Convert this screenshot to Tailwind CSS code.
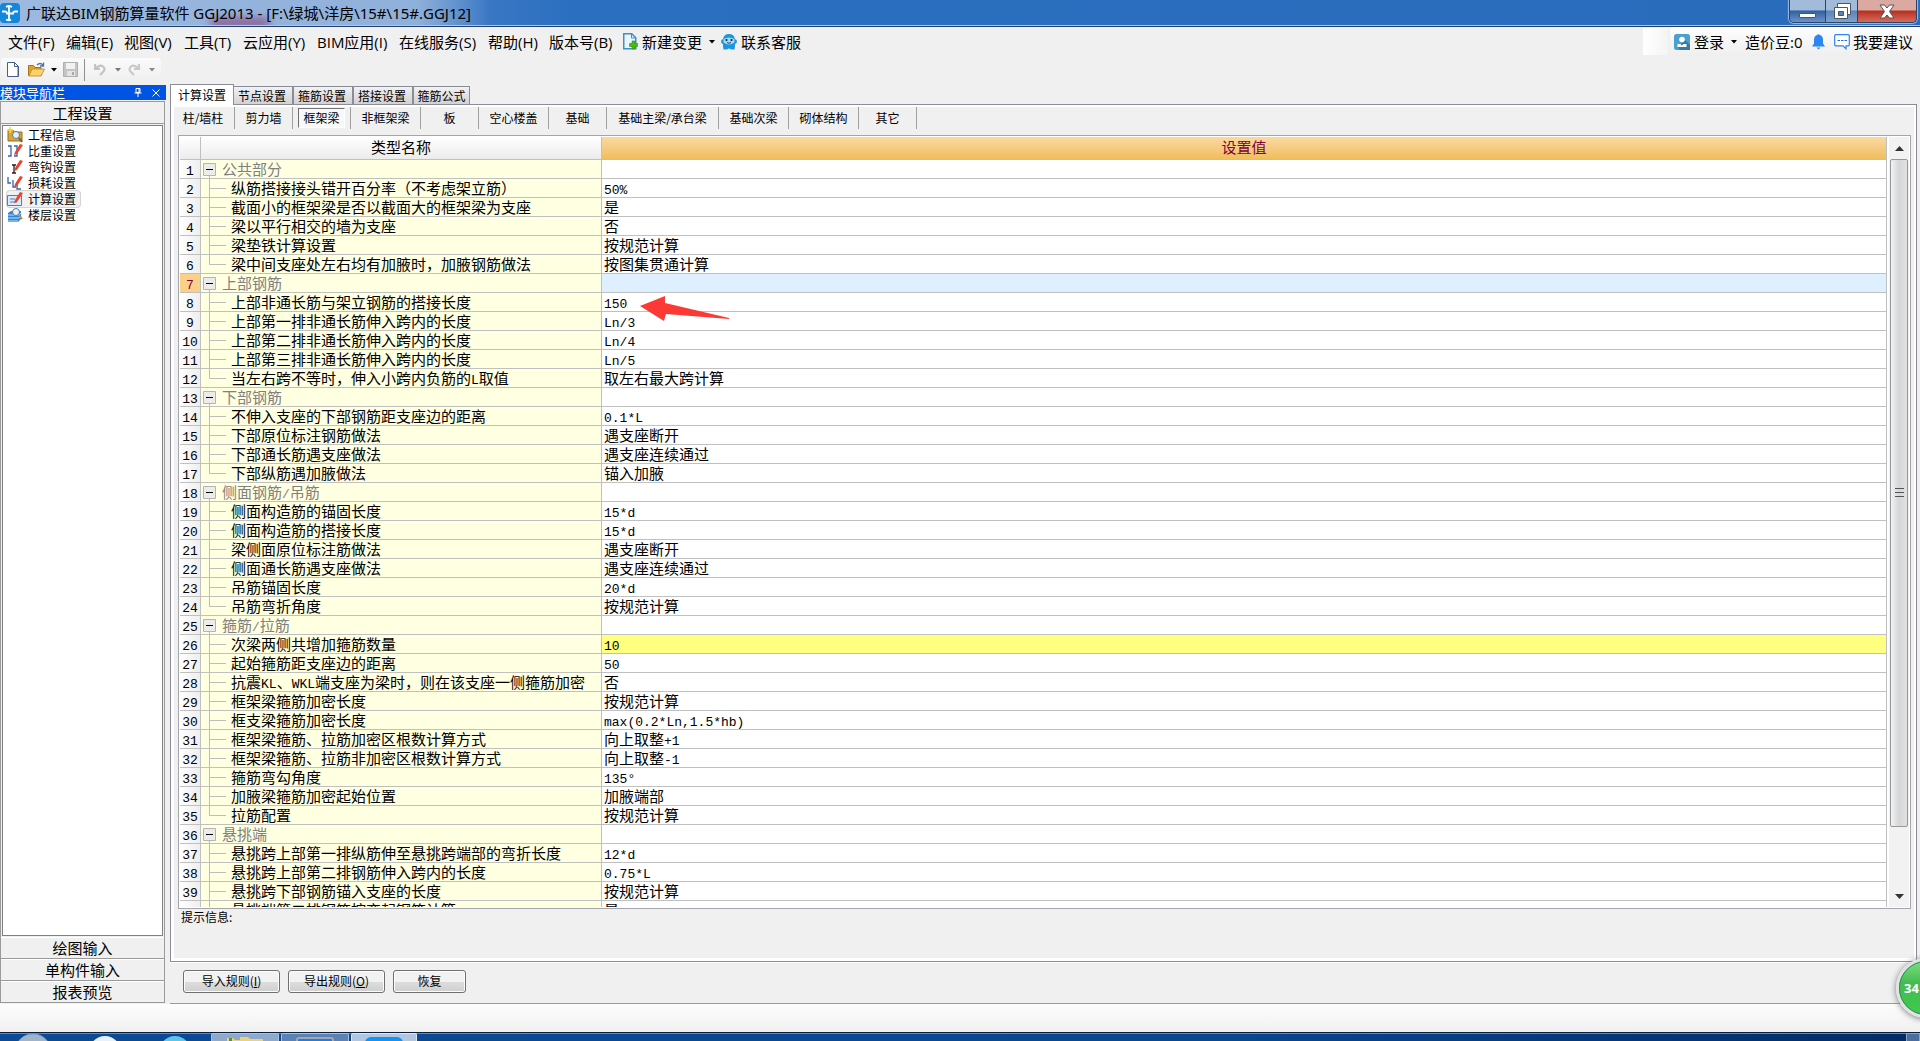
<!DOCTYPE html>
<html lang="zh-CN">
<head>
<meta charset="utf-8">
<title>广联达BIM钢筋算量软件 GGJ2013</title>
<script src="https://cdn.jsdelivr.net/npm/@tailwindcss/browser@4"></script>
</head>
<body class="h-screen overflow-hidden flex flex-col bg-[#f0f0f0] text-black text-[12px] leading-[16px] font-['Noto_Sans_CJK_SC',sans-serif] whitespace-nowrap">

<!-- Title bar -->
<header class="relative shrink-0 h-[27px] flex items-start justify-between overflow-hidden border-b border-[#1d3f73] bg-linear-to-r from-[#7fa3d6] via-[#2a6fc0] via-30% to-[#2a6cbc]">
  <div class="absolute left-0 top-0 h-[26px] w-[490px] bg-linear-to-r from-[#9db9df] via-[#8fb0da] via-85% to-transparent"></div>
  <div class="absolute left-[210px] top-[18px] h-[10px] w-[60px] rounded-full bg-[#8a5f93] blur-[4px]"></div>
  <div class="absolute left-0 top-[25px] h-px w-full bg-[#a9c8ee]"></div>
  <div class="relative flex items-center gap-[6px] h-[25px] text-[15px] font-['Noto_Sans','Noto_Sans_CJK_SC',sans-serif]">
    <svg class="w-[20px] h-[20px]" viewBox="0 0 20 20"><rect width="20" height="20" rx="4" fill="#1287dc"/><path d="M9 3v14M6 4q3-2 6 0M2 8.500h3q2 0 2 2h6q0-2 2-2h3M6 16.500q3 1.500 5 0" fill="none" stroke="#fff" stroke-width="1.800"/></svg>
    <h1>广联达BIM钢筋算量软件 GGJ2013 - [F:\绿城\洋房\15#\15#.GGJ12]</h1>
  </div>
  <div class="relative mr-[3px] flex h-[23px] rounded-b-[5px] border border-t-0 border-[#2b4569] overflow-hidden shadow-[0_0_1px_1px_#9fbde2]">
    <button aria-label="最小化" class="w-[36px] border-r border-[#2b4569] bg-linear-to-b from-[#a3bbdb] from-45% via-[#2f609f] via-50% to-[#6b93c8] flex justify-center items-end pb-[4px]"><span class="w-[17px] h-[5px] bg-white border border-[#4b5568] rounded-[1px]"></span></button>
    <button aria-label="还原" class="w-[32px] border-r border-[#2b4569] bg-linear-to-b from-[#a3bbdb] from-45% via-[#5a84b8] via-50% to-[#7fa2d0] flex justify-center items-center">
      <svg class="w-[20px] h-[18px]" viewBox="0 0 20 18"><path d="M5.500 1.500h13v11h-13z" fill="#fff" stroke="#4b5568"/><path d="M2.500 5.500h13v11h-13z" fill="#fff" stroke="#4b5568"/><path d="M6.500 9.500h5v4h-5z" fill="#5a84b8" stroke="#4b5568"/></svg>
    </button>
    <button aria-label="关闭" class="w-[58px] bg-linear-to-b from-[#dba8a2] from-45% via-[#b52f1f] via-50% to-[#d9695a] flex justify-center items-center">
      <svg class="w-[16px] h-[15px]" viewBox="0 0 16 15"><path d="M1 1h4.500l2.500 3 2.500-3H15l-4.500 6.500L15 14h-4.500L8 11l-2.500 3H1l4.500-6.500z" fill="#fff" stroke="#54505c"/></svg>
    </button>
  </div>
</header>

<!-- Menu bar -->
<nav class="shrink-0 h-[31px] flex justify-between pl-[8px] text-[15px] font-['Open_Sans','Noto_Sans_CJK_SC',sans-serif]">
  <div class="flex items-center pb-[2px]">
    <button class="w-[58px] text-left">文件(F)</button>
    <button class="w-[58px] text-left">编辑(E)</button>
    <button class="w-[60px] text-left">视图(V)</button>
    <button class="w-[59px] text-left">工具(T)</button>
    <button class="w-[74px] text-left">云应用(Y)</button>
    <button class="w-[82px] text-left">BIM应用(I)</button>
    <button class="w-[89px] text-left">在线服务(S)</button>
    <button class="w-[61px] text-left">帮助(H)</button>
    <button class="w-[74px] text-left">版本号(B)</button>
    <button class="w-[98px] flex items-center gap-[4px]">
      <svg class="w-[15px] h-[17px] shrink-0" viewBox="0 0 15 17"><path d="M.75.750h8l4 4v11h-12z" fill="#eaf6ff" stroke="#3d8fc4" stroke-width="1.500"/><path d="M8.500 1v4h4" fill="none" stroke="#3d8fc4"/><path d="M9 8h3v2.500h2.500v3H12V16H9v-2.500H6.500v-3H9z" fill="#4eb81e" stroke="#2f8a0c" stroke-width=".6"/></svg>
      新建变更
      <svg class="w-[6px] h-[4px] ml-[3px] shrink-0" viewBox="0 0 6 4"><path d="M0 0h6L3 3.500z"/></svg>
    </button>
    <button class="flex items-center gap-[4px]">
      <svg class="w-[16px] h-[16px]" viewBox="0 0 16 16"><path d="M2 5q1-5 6-5t6 5q2 .5 2 2.500T14 10v2l-.5 3.500h-3L8 14.500l-2.500 1h-3L2 12v-2Q0 9.500 0 7.500T2 5z" fill="#1b95dd"/><path d="M2.500 5q5.500-3 11 0v3.500q-5.500 4-11 0z" fill="#9fd9f8"/><circle cx="5.500" cy="6" r="1.100" fill="#123"/><circle cx="10.500" cy="6" r="1.100" fill="#123"/><path d="M6 8.500q2 1.500 4 0" fill="none" stroke="#123" stroke-width=".8"/></svg>
      联系客服
    </button>
  </div>
  <div class="flex">
    <div class="w-[25px] h-[27px] mt-px mr-[2px] bg-linear-to-r from-white to-[#f4f4f4]"></div>
    <div class="h-[29px] flex items-center pl-[4px] pr-[7px] rounded-[3px] bg-linear-to-b from-[#fdfdfd] to-[#efefef]">
      <button class="w-[71px] flex items-center gap-[4px]">
        <svg class="w-[16px] h-[16px] shrink-0" viewBox="0 0 16 16"><rect width="16" height="16" rx="2.500" fill="#4ba0cf"/><path d="m11 6 5 5v5H6l-2-3z" fill="#39799f"/><circle cx="8" cy="5.500" r="2.800" fill="#fff"/><path d="M3.500 10h3L8 11.500 9.500 10h3v3h-9z" fill="#fff"/></svg>
        登录
        <svg class="w-[6px] h-[4px] ml-[3px] shrink-0" viewBox="0 0 6 4"><path d="M0 0h6L3 3.500z"/></svg>
      </button>
      <span class="w-[67px]">造价豆:0</span>
      <button aria-label="通知" class="w-[22px]"><svg class="w-[13px] h-[16px]" viewBox="0 0 13 16"><path d="M5 1q1.500-1.500 3 0 3 1 3 5v3.500l2 3H0l2-3V6q0-4 3-5zM4.500 13.500h4L6.500 15.500z" fill="#2a86f0"/></svg></button>
      <button class="flex items-center gap-[3px]">
        <svg class="w-[16px] h-[16px]" viewBox="0 0 16 16"><path d="M1.500.7h13l.8.8v9.500l-.8.8H12v3l-3-3H1.500l-.8-.8V1.500z" fill="#fff" stroke="#2a86f0" stroke-width="1.200"/><path d="M3.500 6.500H6m1 0h2.500m1 0H13" stroke="#2a6fd0" stroke-width="1.200"/></svg>
        我要建议
      </button>
    </div>
  </div>
</nav>

<!-- Tool bar -->
<div class="shrink-0 h-[25px] flex">
  <div class="ml-px h-[23px] w-[160px] rounded-[3px] flex items-center bg-linear-to-b from-[#fbfbfb] to-[#efefef]">
    <button aria-label="新建" class="w-[26px] pl-[6px]"><svg class="w-[12px] h-[15px]" viewBox="0 0 12 15"><path d="M.5.500h7l4 4v10H.5z" fill="#fff" stroke="#4a5f86"/><path d="M7.500.500v4h4M11 5v9" fill="none" stroke="#4a5f86"/></svg></button>
    <button aria-label="打开" class="w-[36px] flex items-center gap-[6px] pl-px">
      <svg class="w-[17px] h-[15px]" viewBox="0 0 17 15"><path d="M.5 13.500v-10h5l1.500 2h6v8z" fill="#e0a32e" stroke="#a8741a"/><path d="m1 14 3-7h12.500l-3.500 7z" fill="#fbd36a" stroke="#b98524" stroke-width=".8"/><path d="M9 3q3-3 6 0M15.500.500V4H12" fill="none" stroke="#4773a8" stroke-width="1.300"/></svg>
      <svg class="w-[6px] h-[4px]" viewBox="0 0 6 4"><path d="M0 0h6L3 3.500z"/></svg>
    </button>
    <button aria-label="保存" class="w-[22px] border-r border-[#8e8e8e] h-[22px] flex items-center"><svg class="w-[15px] h-[15px]" viewBox="0 0 15 15"><path d="M.5.500h14v14H.5z" fill="#c4c4c4" stroke="#b0b0b0"/><path d="M3 1h9v6H3z" fill="#f2f2f2"/><path d="M4 9h8v5H4z" fill="#e4e4e4"/><path d="M9 10h2v3H9z" fill="#aaa"/></svg></button>
    <button aria-label="撤销" class="w-[36px] pl-[9px] flex items-center gap-[9px]">
      <svg class="w-[12px] h-[13px] shrink-0" viewBox="0 0 12 13"><path d="M1 1v5h5M1.500 5.500Q6 1 9 3.500t0 5.500L6 12" fill="none" stroke="#c3c3c3" stroke-width="2.200"/></svg>
      <svg class="w-[6px] h-[4px] shrink-0" viewBox="0 0 6 4"><path d="M0 0h6L3 3.500z" fill="#777"/></svg>
    </button>
    <button aria-label="重做" class="w-[36px] pl-[7px] flex items-center gap-[9px]">
      <svg class="w-[12px] h-[13px] shrink-0" viewBox="0 0 12 13"><path d="M11 1v5H6M10.500 5.500Q6 1 3 3.500T3 9l3 3" fill="none" stroke="#c9c9c9" stroke-width="2.200"/></svg>
      <svg class="w-[6px] h-[4px] shrink-0" viewBox="0 0 6 4"><path d="M0 0h6L3 3.500z" fill="#888"/></svg>
    </button>
  </div>
</div>

<!-- Work area -->
<div class="flex-1 min-h-0 flex">

  <!-- Module navigator -->
  <aside class="shrink-0 w-[166px] flex flex-col pt-[2px]">
    <div class="shrink-0 h-[15px] flex items-center bg-[#0054e3] text-white">
      <span class="flex-1 text-[13px] leading-[15px]">模块导航栏</span>
      <button aria-label="固定" class="w-[18px]"><svg class="w-[8px] h-[9px]" viewBox="0 0 8 9"><path d="M2 .500h4v4H2zM5 .500v4M.5 5h7M4 5v4" fill="none" stroke="#fff"/></svg></button>
      <button aria-label="关闭" class="w-[14px]"><svg class="w-[8px] h-[8px]" viewBox="0 0 8 8"><path d="m.5.500 7 7m0-7-7 7" fill="none" stroke="#fff"/></svg></button>
    </div>
    <div class="flex-1 min-h-0 mt-px mr-px flex flex-col border-x border-[#9a9a9a] text-[15px]">
      <button class="shrink-0 h-[23px] border-y border-[#9a9a9a]">工程设置</button>
      <ul class="flex-1 mx-px mt-px mb-px border border-[#808080] bg-white pl-[4px] pt-px text-[12px]" id="nav"></ul>
      <button class="shrink-0 h-[22px] border-y border-b-[#9a9a9a] border-t-white">绘图输入</button>
      <button class="shrink-0 h-[22px] border-y border-b-[#9a9a9a] border-t-white">单构件输入</button>
      <button class="shrink-0 h-[22px] border-y border-b-[#9a9a9a] border-t-white">报表预览</button>
    </div>
    <div class="h-px"></div>
  </aside>

  <main class="flex-1 min-w-0 ml-[4px] flex flex-col border-b border-[#9a9a9a] pr-[3px]">
    <div role="tablist" class="shrink-0 h-[21px] flex items-end">
      <button role="tab" aria-selected="true" class="relative z-10 w-[64px] h-[21px] -mb-px border border-b-0 border-[#8c8c98] bg-white pb-px">计算设置</button>
      <button role="tab" class="w-[59px] h-[18px] pr-[2px] border border-l-0 border-b-0 border-[#8c8c98] bg-linear-to-b from-[#f2f2f2] to-[#d2d2d2]">节点设置</button>
      <button role="tab" class="w-[60px] h-[18px] pr-[2px] border border-b-0 border-[#8c8c98] bg-linear-to-b from-[#f2f2f2] to-[#d2d2d2]">箍筋设置</button>
      <button role="tab" class="w-[60px] h-[18px] pr-[2px] border border-b-0 border-[#8c8c98] bg-linear-to-b from-[#f2f2f2] to-[#d2d2d2]">搭接设置</button>
      <button role="tab" class="w-[57px] h-[18px] border border-b-0 border-[#8c8c98] bg-linear-to-b from-[#f2f2f2] to-[#d2d2d2]">箍筋公式</button>
    </div>

    <div class="flex-1 min-h-0 border border-[#8c8c98] bg-white p-[3px] pr-[2px] pt-[2px] flex">
      <div class="flex-1 min-w-0 bg-[#f0f0f0] flex flex-col">
        <div class="shrink-0 h-[22px] flex">
          <button class="w-[61px] pr-[2px] border-r border-[#a0a0a0]">柱/墙柱</button>
          <button class="w-[58px] border-r border-[#a0a0a0]">剪力墙</button>
          <div class="w-[58px] border-r border-[#a0a0a0] px-[5px] py-px"><button class="w-full h-[20px] border border-t-[#707070] border-l-[#707070] border-b-white border-r-white bg-[#f8f8f8]">框架梁</button></div>
          <button class="w-[70px] border-r border-[#a0a0a0]">非框架梁</button>
          <button class="w-[58px] border-r border-[#a0a0a0]">板</button>
          <button class="w-[70px] border-r border-[#a0a0a0]">空心楼盖</button>
          <button class="w-[58px] border-r border-[#a0a0a0]">基础</button>
          <button class="w-[112px] border-r border-[#a0a0a0]">基础主梁/承台梁</button>
          <button class="w-[70px] border-r border-[#a0a0a0]">基础次梁</button>
          <button class="w-[70px] border-r border-[#a0a0a0]">砌体结构</button>
          <button class="w-[58px] border-r border-[#a0a0a0]">其它</button>
        </div>

        <!-- Settings grid -->
        <div class="flex-1 min-h-0 mt-[6px] ml-[4px] mr-[3px] border border-[#a5a5ad] bg-white p-px flex">
          <div class="flex-1 min-w-0 overflow-hidden relative">
            <table class="w-full table-fixed border-separate border-spacing-0 text-[15px] leading-[18px]">
              <colgroup><col class="w-[21px]"><col class="w-[401px]"><col></colgroup>
              <thead>
                <tr class="h-[23px]">
                  <th class="p-0 border-r border-b border-[#c0c0c0] bg-linear-to-b from-white to-[#ececec]"></th>
                  <th class="p-0 pb-[2px] font-normal border-r border-b border-[#c0c0c0] bg-linear-to-b from-white to-[#ececec]">类型名称</th>
                  <th class="p-0 pb-[2px] font-normal border-r border-b border-[#c0c0c0] bg-linear-to-b from-[#fad9a0] to-[#f0be5c] text-[#800040]">设置值</th>
                </tr>
              </thead>
              <tbody id="rows"></tbody>
            </table>
            <svg class="absolute left-[460px] top-[159px] w-[90px] h-[25px]" viewBox="0 0 90 25"><path d="M0 10 25 0v7l64 15v1L26 18l-2 7z" fill="#fb3a35"/></svg>
          </div>
          <div class="w-[20px] ml-[2px] flex flex-col items-center bg-[#f2f2f2]">
            <button aria-label="向上滚动" class="h-[22px] flex items-center"><svg class="w-[9px] h-[5px]" viewBox="0 0 9 5"><path d="M0 5h9L4.500 0z" fill="#333"/></svg></button>
            <div class="flex-1 w-full relative">
              <div class="absolute inset-x-px top-0 h-[92%] rounded-[2px] border border-[#979797] bg-linear-to-r from-[#f3f3f3] via-[#d4d6d8] via-50% to-[#e2e2e2] flex flex-col items-center justify-center gap-[3px]">
                <span class="w-[9px] h-px bg-[#555]"></span><span class="w-[9px] h-px bg-[#555]"></span><span class="w-[9px] h-px bg-[#555]"></span>
              </div>
            </div>
            <button aria-label="向下滚动" class="h-[22px] flex items-center"><svg class="w-[9px] h-[5px]" viewBox="0 0 9 5"><path d="M0 0h9L4.500 5z" fill="#333"/></svg></button>
          </div>
        </div>
        <p class="shrink-0 h-[49px] pl-[7px]">提示信息:</p>
      </div>
    </div>

    <div class="shrink-0 h-[41px] border-t border-white flex pt-[7px] pl-[13px] gap-[8px]">
      <button class="w-[97px] h-[23px] pb-[2px] rounded-[3px] border border-[#707070] shadow-[inset_0_0_0_1px_#fcfcfc] bg-linear-to-b from-[#f2f2f2] from-50% via-[#dddddd] via-51% to-[#cfcfcf]">导入规则(<u>I</u>)</button>
      <button class="w-[97px] h-[23px] pb-[2px] rounded-[3px] border border-[#707070] shadow-[inset_0_0_0_1px_#fcfcfc] bg-linear-to-b from-[#f2f2f2] from-50% via-[#dddddd] via-51% to-[#cfcfcf]">导出规则(<u>O</u>)</button>
      <button class="w-[73px] h-[23px] pb-[2px] rounded-[3px] border border-[#707070] shadow-[inset_0_0_0_1px_#fcfcfc] bg-linear-to-b from-[#f2f2f2] from-50% via-[#dddddd] via-51% to-[#cfcfcf]">恢复</button>
    </div>
  </main>
</div>

<!-- Status bar -->
<footer class="shrink-0 h-[28px] bg-linear-to-b from-[#fdfdfd] to-[#f0f0f0]"></footer>

<!-- Desktop taskbar, only its top edge is on screen -->
<div class="shrink-0 h-[9px] flex justify-between overflow-hidden border-t border-[#0a1c38] shadow-[inset_0_1px_0_#5f8cc4] bg-linear-to-r from-[#0b4a94] via-[#0a4590] via-65% to-[#022c66]">
  <div class="flex">
    <svg class="w-[211px] h-[8px]" viewBox="0 0 211 8"><circle cx="33" cy="19" r="18" fill="#9fb4cc" stroke="#7ea4cf"/><circle cx="105" cy="19" r="16" fill="#e6f1fb"/><circle cx="175" cy="19" r="16" fill="#5fc4ea"/></svg>
    <div class="w-[68px] mr-[2px] border border-b-0 border-[#a9c0de] rounded-t-[2px] bg-[#8ea9cb] flex justify-center"><svg class="w-[36px] h-[8px]" viewBox="0 0 36 8"><path d="M0 8V4h6l2 2h5V3h8l2 2h13v3z" fill="#ecd27a"/><path d="M2 8V4h3v4z" fill="#3f9a4a"/></svg></div>
    <div class="w-[68px] mr-[2px] border border-b-0 border-[#a9c0de] rounded-t-[2px] bg-[#5c81b4] flex justify-center"><div class="mt-[3px] w-[38px] h-[8px] rounded-t-[3px] border-2 border-[#9ea7b3] bg-[#1f7fe0]"></div></div>
    <div class="w-[66px] border border-b-0 border-[#dfe9f5] rounded-t-[2px] bg-[#b3c6df] flex justify-center"><div class="mt-[3px] w-[38px] h-[8px] rounded-t-[6px] bg-[#1592f5]"></div></div>
  </div>
  <div class="w-[14px] border border-b-0 border-[#8ea6c6] bg-[#4c6e9e]"></div>
</div>

<!-- Floating accelerator ball -->
<button class="absolute right-[-36px] bottom-[23px] w-[60px] h-[60px] rounded-full border-[3px] border-[#e2e2e2] shadow-[0_1px_6px_#777] bg-linear-to-b from-[#7ddc84] via-[#43bd50] via-40% to-[#3fca4e] text-white text-[13px] font-bold text-left pl-[5px] font-['Open_Sans',sans-serif]"><span class="absolute inset-0 rounded-full border border-[#2b8f5c]"></span>34</button>

<script>
const pen = '<path d="M8 9 13 1l3 1-6 9-3 1z" fill="#e8452c"/>';
const navItems = [
  ['工程信息', '<path d="M1 3h5l1 2h8v9H1z" fill="#d9a536" stroke="#94701c"/><circle cx="9" cy="8" r="3.500" fill="#e3f2fc" stroke="#5b7895"/><path d="m12 11 3 4" stroke="#8a5a1e" stroke-width="2"/><path d="M3 0v6M0 3h6" stroke="#ffd83a" stroke-width="1.500"/>'],
  ['比重设置', '<path d="M1 3h3v10H1M7 3h3v10H7" fill="none" stroke="#2e66b0" stroke-width="1.300"/>' + pen],
  ['弯钩设置', '<path d="M5 6h4M7 6v8M5 14h4" fill="none" stroke="#222" stroke-width="1.300"/>' + pen],
  ['损耗设置', '<path d="M1 2v6h3M6 5v7h3M10 9v5h4" fill="none" stroke="#2e66b0" stroke-width="1.300"/>' + pen],
  ['计算设置', '<path d="M.5 4.500h14v10H.5z" fill="#dcebfa" stroke="#4f7fb8"/><path d="M3 8h5M3 11h7" stroke="#4f7fb8"/>' + pen],
  ['楼层设置', '<path d="m1 6 3-2h10v8l-3 3H1z" fill="#2f86d6"/><path d="M1 8h11l2-2M1 11h11l2-2M1 14h10" fill="none" stroke="#bfe0fa"/><circle cx="9" cy="5" r="3.500" fill="#e3f2fc" stroke="#5b7895"/><path d="m12 8 3 4" stroke="#c08a3a" stroke-width="2"/>']
];
document.getElementById('nav').innerHTML = navItems.map(([label, art], i) =>
  `<li class="h-[16px]"><a href="#" class="${i === 4
    ? 'inline-flex items-center gap-[5px] h-[16px] pr-[4px] rounded-[3px] bg-[#f1f1f1] shadow-[0_0_0_1px_#d4d4d4]'
    : 'inline-flex items-center gap-[5px] h-[16px] pr-[4px]'}"><svg class="w-[16px] h-[16px]" viewBox="0 0 16 16">${art}</svg>${label}</a></li>`).join('');

// A leading '#' marks a group row.
const data = [
  ['#公共部分', ''],
  ['纵筋搭接接头错开百分率（不考虑架立筋）', '50%'],
  ['截面小的框架梁是否以截面大的框架梁为支座', '是'],
  ['梁以平行相交的墙为支座', '否'],
  ['梁垫铁计算设置', '按规范计算'],
  ['梁中间支座处左右均有加腋时，加腋钢筋做法', '按图集贯通计算'],
  ['#上部钢筋', ''],
  ['上部非通长筋与架立钢筋的搭接长度', '150'],
  ['上部第一排非通长筋伸入跨内的长度', 'Ln/3'],
  ['上部第二排非通长筋伸入跨内的长度', 'Ln/4'],
  ['上部第三排非通长筋伸入跨内的长度', 'Ln/5'],
  ['当左右跨不等时，伸入小跨内负筋的L取值', '取左右最大跨计算'],
  ['#下部钢筋', ''],
  ['不伸入支座的下部钢筋距支座边的距离', '0.1*L'],
  ['下部原位标注钢筋做法', '遇支座断开'],
  ['下部通长筋遇支座做法', '遇支座连续通过'],
  ['下部纵筋遇加腋做法', '锚入加腋'],
  ['#侧面钢筋/吊筋', ''],
  ['侧面构造筋的锚固长度', '15*d'],
  ['侧面构造筋的搭接长度', '15*d'],
  ['梁侧面原位标注筋做法', '遇支座断开'],
  ['侧面通长筋遇支座做法', '遇支座连续通过'],
  ['吊筋锚固长度', '20*d'],
  ['吊筋弯折角度', '按规范计算'],
  ['#箍筋/拉筋', ''],
  ['次梁两侧共增加箍筋数量', '10'],
  ['起始箍筋距支座边的距离', '50'],
  ['抗震KL、WKL端支座为梁时，则在该支座一侧箍筋加密', '否'],
  ['框架梁箍筋加密长度', '按规范计算'],
  ['框支梁箍筋加密长度', 'max(0.2*Ln,1.5*hb)'],
  ['框架梁箍筋、拉筋加密区根数计算方式', '向上取整+1'],
  ['框架梁箍筋、拉筋非加密区根数计算方式', '向上取整-1'],
  ['箍筋弯勾角度', '135°'],
  ['加腋梁箍筋加密起始位置', '加腋端部'],
  ['拉筋配置', '按规范计算'],
  ['#悬挑端', ''],
  ['悬挑跨上部第一排纵筋伸至悬挑跨端部的弯折长度', '12*d'],
  ['悬挑跨上部第二排钢筋伸入跨内的长度', '0.75*L'],
  ['悬挑跨下部钢筋锚入支座的长度', '按规范计算'],
  ['悬挑端第二排钢筋按弯起钢筋计算', '是']
];
const latin = s => s.replace(/[\x21-\x7e°]+/g, m => `<span class="font-['Liberation_Mono',monospace] text-[13px]">${m}</span>`);
const minus = '<svg class="w-[21px] h-[18px] shrink-0" viewBox="0 0 21 18"><path d="M2.500 3.500h12v12h-12z" fill="#ececec" stroke="#b4b4b4"/><path d="M5 9.500h7" stroke="#000"/><path d="M8.500 16v2" stroke="#bdbdbd"/></svg>';
const branch = '<svg class="w-[30px] h-[18px] shrink-0" viewBox="0 0 30 18"><path d="M8.500 0v18M9 9.500h16" stroke="#bdbdbd"/></svg>';
const lastBranch = '<svg class="w-[30px] h-[18px] shrink-0" viewBox="0 0 30 18"><path d="M8.500 0v9.500H25" fill="none" stroke="#bdbdbd"/></svg>';
document.getElementById('rows').innerHTML = data.map(([name, value], i) => {
  const group = name[0] === '#';
  const next = data[i + 1];
  const art = group ? minus : (next && next[0][0] === '#' ? lastBranch : branch);
  const numStyle = i === 6 ? 'bg-[#fdd08a] text-[#800040]' : 'bg-linear-to-r from-white to-[#eeeeee]';
  const valueStyle = i === 6 ? 'bg-[#deefff]' : i === 25 ? 'bg-[#ffff80]' : 'bg-white';
  return `<tr class="h-[19px]">
    <th scope="row" class="p-0 h-[19px] font-normal border-r border-b border-[#c0c0c0] ${numStyle}"><div class="h-[18px]">${latin(String(i + 1))}</div></th>
    <td class="p-0 border-r border-b border-[#c0c0c0] bg-[#ffffe1]"><div class="h-[18px] flex">${art}<span class="${group ? 'text-[#808080]' : 'text-black'}">${latin(name.replace('#', ''))}</span></div></td>
    <td class="p-0 pl-[2px] border-r border-b border-[#c0c0c0] ${valueStyle}"><div class="h-[18px]">${latin(value)}</div></td>
  </tr>`;
}).join('');
</script>
</body>
</html>
